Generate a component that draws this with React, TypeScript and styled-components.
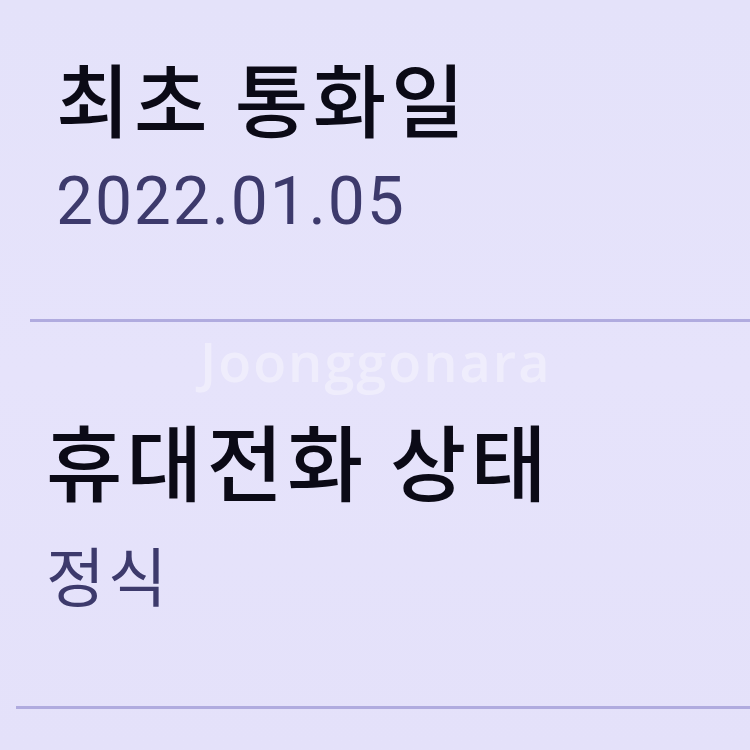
import React from "react";
import styled, { createGlobalStyle } from "styled-components";

const Global = createGlobalStyle`
  html, body { margin: 0; padding: 0; }
  body {
    background: #e5e3fb;
    font-family: "Noto Sans CJK KR", "Noto Sans", sans-serif;
  }
`;

const Screen = styled.div`
  position: relative;
  width: 750px;
  height: 750px;
  overflow: hidden;
  background: linear-gradient(180deg, #e4e2fa 0%, #e6e3fb 50%, #e4e1fa 100%);
  display: flex;
  flex-direction: column;
`;

const Section = styled.section<{ $top: number; $indent: number; $height: number }>`
  display: flex;
  flex-direction: column;
  padding-top: ${(p) => p.$top}px;
  padding-left: ${(p) => p.$indent}px;
  height: ${(p) => p.$height}px;
  box-sizing: border-box;
`;

const Title = styled.div<{ $size: number; $spacing: number }>`
  font-family: "Noto Sans CJK KR", sans-serif;
  font-weight: 500;
  font-size: ${(p) => p.$size}px;
  line-height: 1;
  color: #0b0a16;
  white-space: nowrap;
  letter-spacing: ${(p) => p.$spacing}px;
`;

const Value = styled.div<{ $size: number; $gap: number; $spacing: number; $cjk?: boolean }>`
  margin-top: ${(p) => p.$gap}px;
  font-family: ${(p) => (p.$cjk ? `"Noto Sans CJK KR", sans-serif` : `Roboto, "Noto Sans", sans-serif`)};
  font-weight: 400;
  font-size: ${(p) => p.$size}px;
  line-height: 1;
  letter-spacing: ${(p) => p.$spacing}px;
  color: #3d3a6c;
  white-space: nowrap;
`;

const Divider = styled.div<{ $indent: number }>`
  height: 3px;
  margin-left: ${(p) => p.$indent}px;
  background: #b0abdf;
`;

const Watermark = styled.div`
  position: absolute;
  left: 200px;
  top: 334px;
  font-family: "Open Sans", sans-serif;
  font-weight: 600;
  font-size: 54px;
  line-height: 1;
  letter-spacing: 2px;
  color: rgba(255, 255, 255, 0.38);
  pointer-events: none;
`;

export default function App() {
  return (
    <>
      <Global />
      <Screen>
        <Section $top={56} $indent={56} $height={319}>
          <Title $size={80} $spacing={4.5}>최초 통화일</Title>
          <Value $size={66} $gap={33} $spacing={1.8}>2022.01.05</Value>
        </Section>
        <Divider $indent={30} />
        <Section $top={96} $indent={46} $height={384}>
          <Title $size={83} $spacing={4}>휴대전화 상태</Title>
          <Value $size={64} $gap={40} $spacing={3} $cjk>정식</Value>
        </Section>
        <Divider $indent={16} />
        <Watermark>Joonggonara</Watermark>
      </Screen>
    </>
  );
}
